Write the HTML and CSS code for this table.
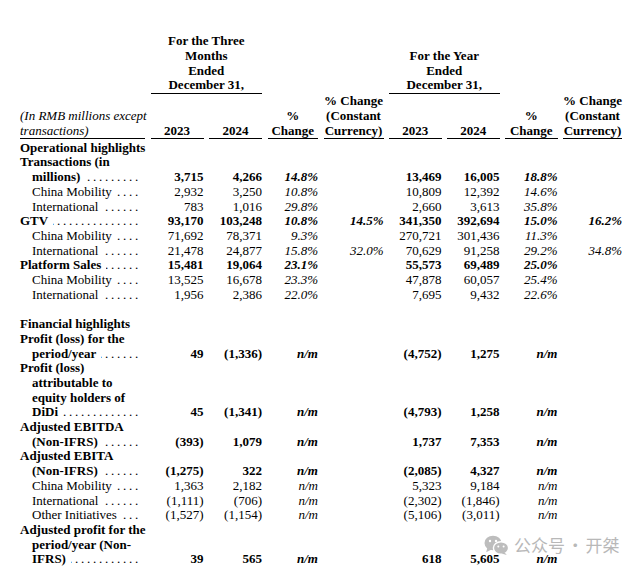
FILE: index.html
```html
<!DOCTYPE html>
<html>
<head>
<meta charset="utf-8">
<link rel="stylesheet" href="styles.css">
</head>
<body>
<div class="page">
  <div class="tbl">
    <div class="hr1">
      <span></span>
      <span class="grp">For the Three<br>Months<br>Ended<br>December 31,</span>
      <span></span><span></span>
      <span class="grp">For the Year<br>Ended<br>December 31,</span>
      <span></span><span></span>
    </div>
    <div class="hr2">
      <span class="hlab">(In RMB millions except<br>transactions)</span>
      <span>2023</span><span>2024</span><span>%<br>Change</span><span>% Change<br>(Constant<br>Currency)</span>
      <span>2023</span><span>2024</span><span>%<br>Change</span><span>% Change<br>(Constant<br>Currency)</span>
    </div>

    <div class="r b first"><span class="lab"><div>Operational highlights</div></span><span></span><span></span><span></span><span></span><span></span><span></span><span></span><span></span></div>
    <div class="r b"><span class="lab"><div>Transactions (in</div><div class="ln c"><span>millions)</span><i class="dl"></i></div></span><span>3,715</span><span>4,266</span><span class="pct">14.8%</span><span></span><span>13,469</span><span>16,005</span><span class="pct">18.8%</span><span></span></div>
    <div class="r"><span class="lab"><div class="ln c"><span>China Mobility</span><i class="dl"></i></div></span><span>2,932</span><span>3,250</span><span class="pct">10.8%</span><span></span><span>10,809</span><span>12,392</span><span class="pct">14.6%</span><span></span></div>
    <div class="r"><span class="lab"><div class="ln c"><span>International</span><i class="dl"></i></div></span><span>783</span><span>1,016</span><span class="pct">29.8%</span><span></span><span>2,660</span><span>3,613</span><span class="pct">35.8%</span><span></span></div>
    <div class="r b"><span class="lab"><div class="ln"><span>GTV</span><i class="dl"></i></div></span><span>93,170</span><span>103,248</span><span class="pct">10.8%</span><span class="pct">14.5%</span><span>341,350</span><span>392,694</span><span class="pct">15.0%</span><span class="pct">16.2%</span></div>
    <div class="r"><span class="lab"><div class="ln c"><span>China Mobility</span><i class="dl"></i></div></span><span>71,692</span><span>78,371</span><span class="pct">9.3%</span><span></span><span>270,721</span><span>301,436</span><span class="pct">11.3%</span><span></span></div>
    <div class="r"><span class="lab"><div class="ln c"><span>International</span><i class="dl"></i></div></span><span>21,478</span><span>24,877</span><span class="pct">15.8%</span><span class="pct">32.0%</span><span>70,629</span><span>91,258</span><span class="pct">29.2%</span><span class="pct">34.8%</span></div>
    <div class="r b"><span class="lab"><div class="ln"><span>Platform Sales</span><i class="dl"></i></div></span><span>15,481</span><span>19,064</span><span class="pct">23.1%</span><span></span><span>55,573</span><span>69,489</span><span class="pct">25.0%</span><span></span></div>
    <div class="r"><span class="lab"><div class="ln c"><span>China Mobility</span><i class="dl"></i></div></span><span>13,525</span><span>16,678</span><span class="pct">23.3%</span><span></span><span>47,878</span><span>60,057</span><span class="pct">25.4%</span><span></span></div>
    <div class="r"><span class="lab"><div class="ln c"><span>International</span><i class="dl"></i></div></span><span>1,956</span><span>2,386</span><span class="pct">22.0%</span><span></span><span>7,695</span><span>9,432</span><span class="pct">22.6%</span><span></span></div>

    <div class="blank"></div>

    <div class="r b"><span class="lab"><div>Financial highlights</div></span><span></span><span></span><span></span><span></span><span></span><span></span><span></span><span></span></div>
    <div class="r b"><span class="lab"><div>Profit (loss) for the</div><div class="ln c"><span>period/year</span><i class="dl"></i></div></span><span>49</span><span>(1,336)</span><span class="pct">n/m</span><span></span><span>(4,752)</span><span>1,275</span><span class="pct">n/m</span><span></span></div>
    <div class="r b"><span class="lab"><div>Profit (loss)</div><div class="c">attributable to</div><div class="c">equity holders of</div><div class="ln c"><span>DiDi</span><i class="dl"></i></div></span><span>45</span><span>(1,341)</span><span class="pct">n/m</span><span></span><span>(4,793)</span><span>1,258</span><span class="pct">n/m</span><span></span></div>
    <div class="r b"><span class="lab"><div>Adjusted EBITDA</div><div class="ln c"><span>(Non-IFRS)</span><i class="dl"></i></div></span><span>(393)</span><span>1,079</span><span class="pct">n/m</span><span></span><span>1,737</span><span>7,353</span><span class="pct">n/m</span><span></span></div>
    <div class="r b"><span class="lab"><div>Adjusted EBITA</div><div class="ln c"><span>(Non-IFRS)</span><i class="dl"></i></div></span><span>(1,275)</span><span>322</span><span class="pct">n/m</span><span></span><span>(2,085)</span><span>4,327</span><span class="pct">n/m</span><span></span></div>
    <div class="r"><span class="lab"><div class="ln c"><span>China Mobility</span><i class="dl"></i></div></span><span>1,363</span><span>2,182</span><span class="pct">n/m</span><span></span><span>5,323</span><span>9,184</span><span class="pct">n/m</span><span></span></div>
    <div class="r"><span class="lab"><div class="ln c"><span>International</span><i class="dl"></i></div></span><span>(1,111)</span><span>(706)</span><span class="pct">n/m</span><span></span><span>(2,302)</span><span>(1,846)</span><span class="pct">n/m</span><span></span></div>
    <div class="r"><span class="lab"><div class="ln c"><span>Other Initiatives</span><i class="dl"></i></div></span><span>(1,527)</span><span>(1,154)</span><span class="pct">n/m</span><span></span><span>(5,106)</span><span>(3,011)</span><span class="pct">n/m</span><span></span></div>
    <div class="r b"><span class="lab"><div>Adjusted profit for the</div><div class="c">period/year (Non-</div><div class="ln c"><span>IFRS)</span><i class="dl"></i></div></span><span>39</span><span>565</span><span class="pct">n/m</span><span></span><span>618</span><span>5,605</span><span class="pct">n/m</span><span></span></div>
  </div>
</div>

<div class="wm">
  <svg class="wm-icon" width="25" height="20" viewBox="0 0 25 20">
    <ellipse cx="9" cy="8" rx="8.5" ry="7.3" fill="#bdbdbd"/>
    <path d="M3.5 12 L2.2 17.2 L8 14.2 Z" fill="#bdbdbd"/>
    <circle cx="6" cy="6" r="1.2" fill="#fff"/>
    <circle cx="12" cy="6" r="1.2" fill="#fff"/>
    <ellipse cx="17" cy="13" rx="7.6" ry="6.3" fill="#bdbdbd" stroke="#fff" stroke-width="1.4"/>
    <path d="M20.5 17.5 L22.8 20 L17.5 18.6 Z" fill="#bdbdbd"/>
    <circle cx="14.3" cy="11.6" r="1" fill="#fff"/>
    <circle cx="19.6" cy="11.6" r="1" fill="#fff"/>
  </svg>
  <span class="wm-text">公众号 · 开桀</span>
</div>
</body>
</html>
```

FILE: styles.css
```css
html, body {
  margin: 0;
  padding: 0;
  background: #fff;
}

body {
  color: #000;
  font-family: "Liberation Serif", "Times New Roman", serif;
  font-size: 13px;
  line-height: 14.7px;
  position: relative;
  width: 640px;
  height: 572px;
  overflow: hidden;
}

.page {
  padding: 34.3px 0 0 20px;
}

.tbl {
  display: grid;
  grid-template-columns: 125px 53px 53px 50.5px 60px 52.5px 52.5px 52.5px 59px;
  column-gap: 5.5px;
  align-items: end;
}

.hr1, .hr2, .r {
  display: contents;
}

.hr1 > span {
  font-weight: bold;
  text-align: center;
}

.hr1 > .grp {
  grid-column: span 2;
  border-bottom: 1px solid #000;
}

.hr2 > span {
  font-weight: bold;
  text-align: center;
  border-bottom: 1px solid #000;
  white-space: nowrap;
  margin-bottom: 1.5px;
}

.hr2 > .hlab {
  font-weight: normal;
  font-style: italic;
  text-align: left;
}

.r > span {
  text-align: right;
  white-space: nowrap;
}

.r > .lab {
  text-align: left;
}

.b > span {
  font-weight: bold;
}

.pct {
  font-style: italic;
}

.lab .c {
  padding-left: 12px;
}

.ln {
  display: flex;
}

.ln > span {
  flex: none;
}

.dl {
  flex: 1;
  min-width: 0;
  overflow: hidden;
  direction: rtl;
  white-space: nowrap;
  font-style: normal;
  font-weight: normal;
  margin-left: 5px;
  margin-right: 7px;
  letter-spacing: -0.25px;
}

.dl::before {
  content: ". . . . . . . . . . . . . . . . . . . . . . . . . . . . . . .";
}

.blank {
  grid-column: 1 / -1;
  height: 14.7px;
}

.wm {
  position: absolute;
  left: 484px;
  top: 535px;
  display: flex;
  align-items: center;
  gap: 5px;
  pointer-events: none;
}

.wm-icon {
  display: block;
}

.wm-text {
  font-family: "Noto Sans CJK SC", "Noto Sans", sans-serif;
  font-size: 17px;
  line-height: 16px;
  word-spacing: -2px;
  color: #b8b8b8;
}
```
